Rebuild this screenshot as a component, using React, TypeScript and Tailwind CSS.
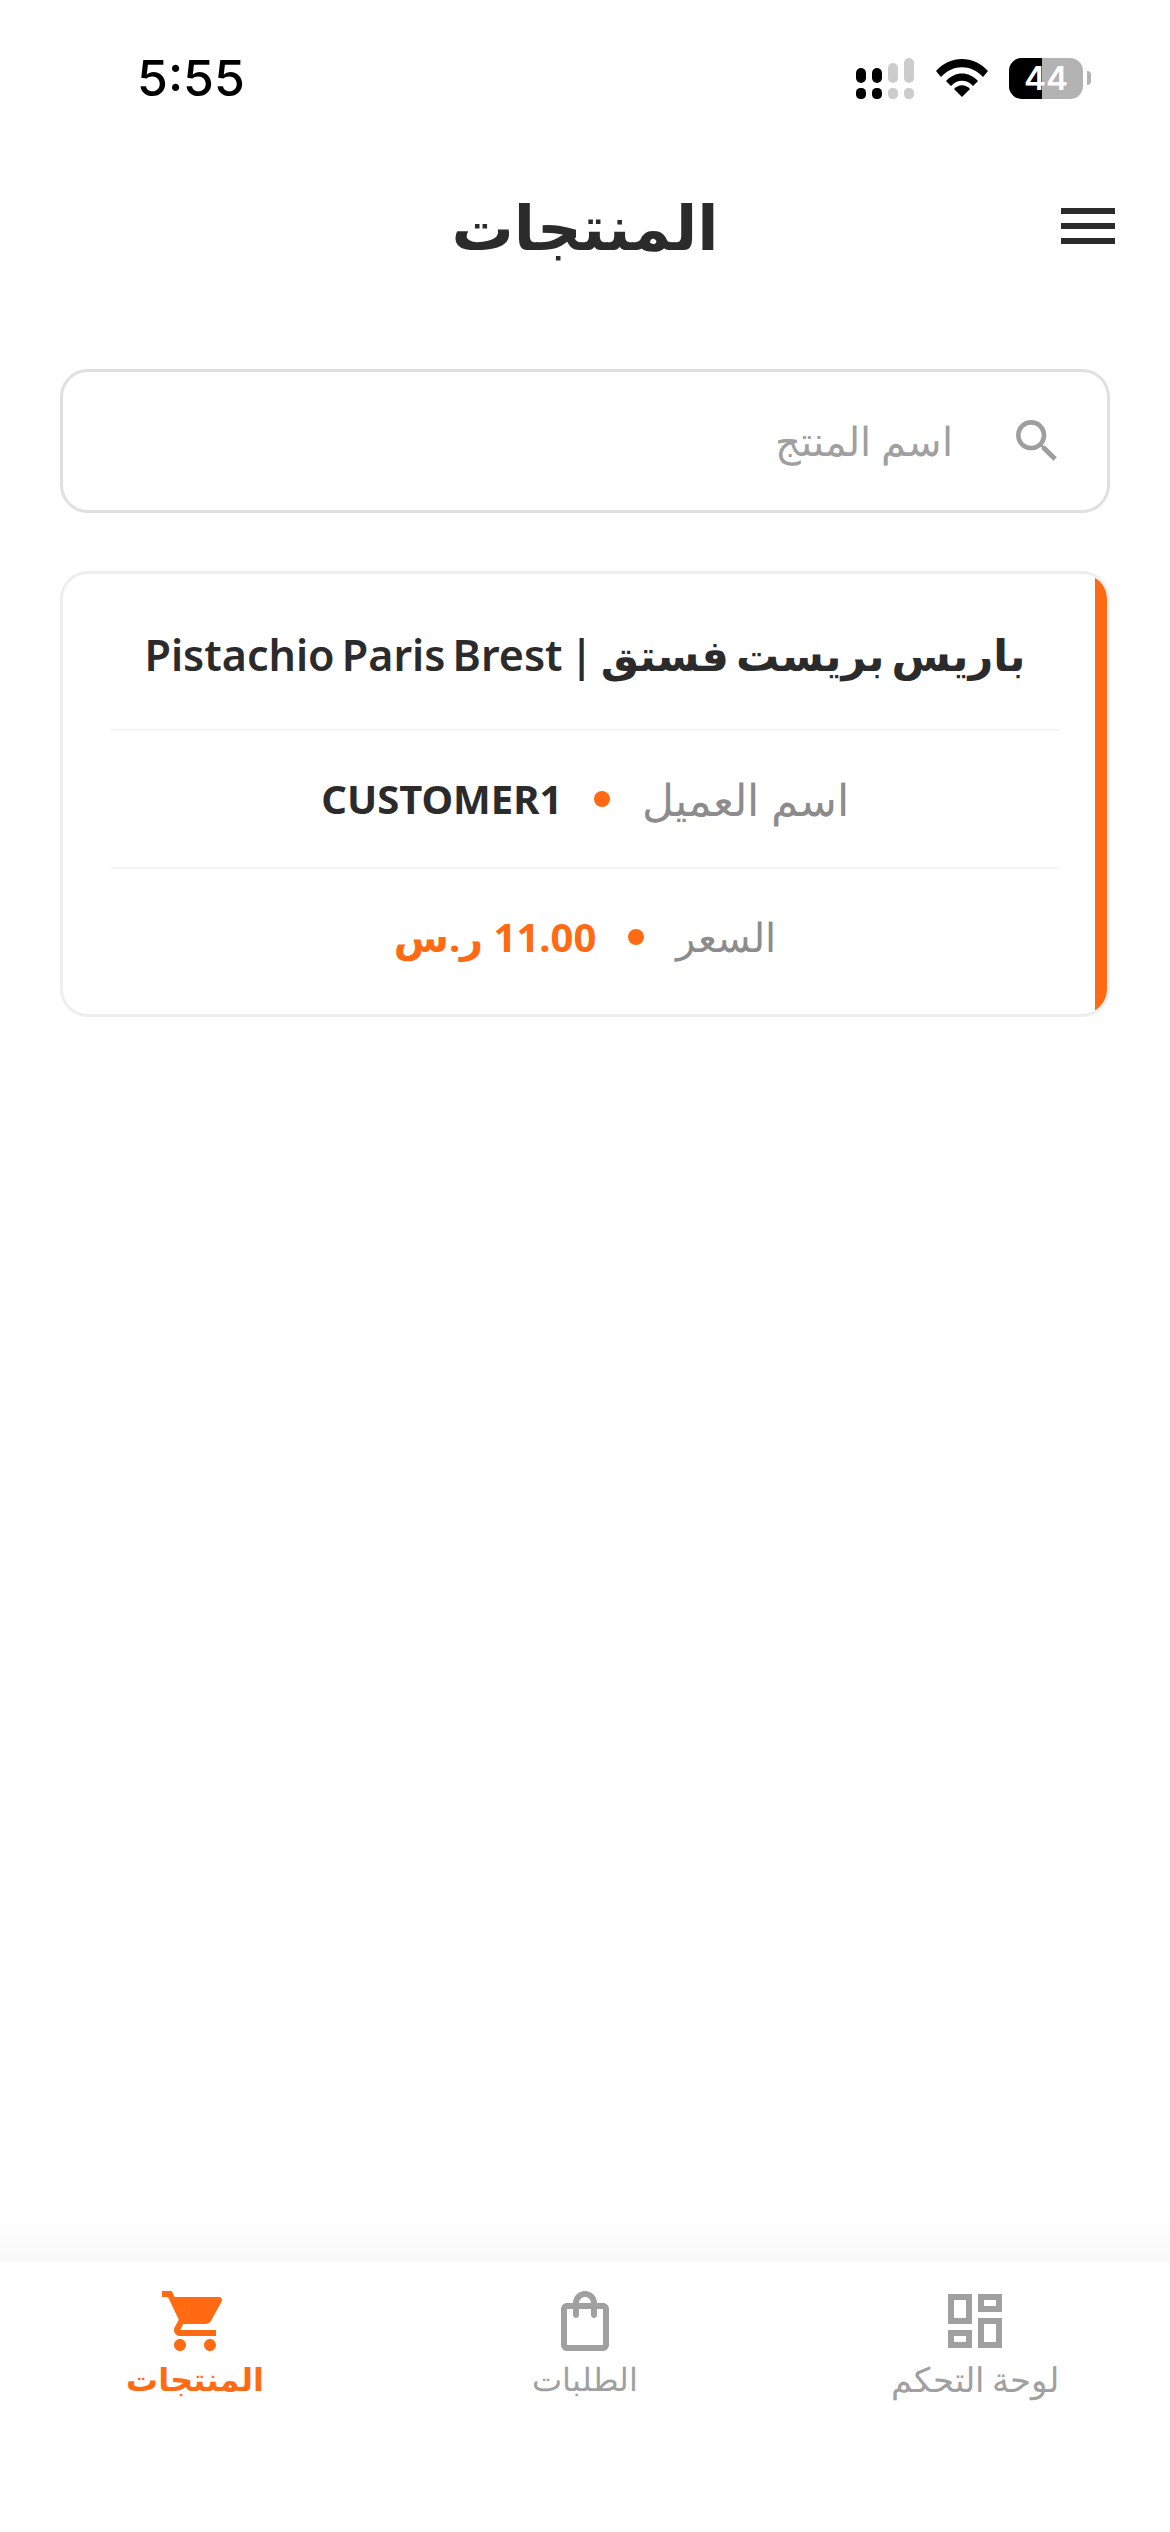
import { MdMenu, MdOutlineDashboard, MdOutlineShoppingBag, MdSearch, MdShoppingCart } from "react-icons/md";

const StatusBar = () => {
  return (
    <div dir="ltr" className="flex items-center justify-between h-[156px] pl-[137px] pr-[79px]">
      <span className="font-['Inter',sans-serif] text-[50px] font-medium text-black leading-none">5:55</span>
      <div className="flex items-center">
        {/* Signal */}
        <svg width="58" height="41" viewBox="0 0 58 41" className="mr-[22px]">
          <rect x="0" y="10" width="10" height="15" rx="5" fill="#000" />
          <rect x="16" y="10" width="10" height="15" rx="5" fill="#000" />
          <rect x="32" y="5" width="10" height="20" rx="5" fill="#ccc" />
          <rect x="48" y="0" width="10" height="25" rx="5" fill="#ccc" />
          <rect x="0" y="30" width="10" height="11" rx="4.5" fill="#000" />
          <rect x="16" y="30" width="10" height="11" rx="4.5" fill="#000" />
          <rect x="32" y="30" width="10" height="11" rx="4.5" fill="#ccc" />
          <rect x="48" y="30" width="10" height="11" rx="4.5" fill="#ccc" />
        </svg>
        {/* Wifi */}
        <svg width="52" height="38" viewBox="0 0 52 38" className="mr-[21px]">
          <path d="M0 12 C14 -4 38 -4 52 12 L47 18 C35 5 17 5 5 18 Z" fill="#000" />
          <path d="M10 22 C19 12 33 12 42 22 L37 27 C31 20 21 20 15 27 Z" fill="#000" />
          <path d="M18 30 C23 25 29 25 34 30 L26 38 Z" fill="#000" />
        </svg>
        {/* Battery */}
        <div className="relative h-[41px] w-[74px] rounded-[13px] bg-[#b3b3b3] overflow-hidden flex items-center justify-center">
          <div className="absolute inset-y-0 left-0 w-[33px] bg-black"></div>
          <span className="relative font-['Inter',sans-serif] text-[33px] font-semibold text-white leading-none">44</span>
        </div>
        <div className="h-[14px] w-[4px] rounded-r-full bg-[#b3b3b3] ml-[4px]"></div>
      </div>
    </div>
  );
};

const Row = ({ label, value, labelClass, valueClass }: { label: string; value: string; labelClass: string; valueClass: string }) => {
  return (
    <div className="flex items-center justify-center h-[136px]">
      <span className={"text-[#8c8c8c] font-light leading-none " + labelClass}>{label}</span>
      <span className="w-[16px] h-[16px] mx-[32px] rounded-full bg-[#ff6a13]"></span>
      <span className={"text-[40px] font-bold leading-none " + valueClass}>{value}</span>
    </div>
  );
};

const NavItem = ({ icon, label, labelClass, active }: { icon: React.ReactNode; label: string; labelClass: string; active?: boolean }) => {
  return (
    <div className={"flex flex-col items-center " + (active ? "text-[#ff6a13]" : "text-[#a0a0a0]")}>
      {icon}
      <span className={"leading-[44px] " + labelClass + (active ? " font-bold" : " font-light")}>{label}</span>
    </div>
  );
};

export default function App() {
  return (
    <div dir="rtl" className="flex flex-col min-h-[2532px] bg-white font-['Noto_Sans','DejaVu_Sans',sans-serif]">
      <StatusBar />

      {/* Header */}
      <div className="grid grid-cols-[1fr_auto_1fr] items-center h-[140px]">
        <div className="flex pr-[46px]">
          <MdMenu size={72} className="text-[#2b2b2b]" />
        </div>
        <h1 className="text-[62px] font-bold text-[#2b2b2b] leading-none">المنتجات</h1>
        <div></div>
      </div>

      <main className="flex-1 px-[60px] pt-[73px]">
        {/* Search */}
        <div className="flex items-center h-[144px] rounded-[28px] border-[3px] border-[#e0e0e0] pr-[42px] gap-[56px]">
          <MdSearch size={56} className="text-[#9e9e9e]" />
          <span className="text-[40px] text-[#a0a0a0] font-light">اسم المنتج</span>
        </div>

        {/* Card */}
        <div className="relative mt-[58px] rounded-[28px] border-[3px] border-[#eeeeee] bg-white overflow-hidden">
          <div className="absolute inset-y-0 right-0 w-[12px] bg-[#ff6a13]"></div>
          <div className="flex items-center justify-center h-[157px] mx-[48px] border-b-2 border-[#f5f5f5] pt-[6px]">
            <span className="text-[43px] font-semibold text-[#2b2b2b] leading-none [word-spacing:-4px]">باريس بريست فستق | Pistachio Paris Brest</span>
          </div>
          <div className="mx-[48px] border-b-2 border-[#f5f5f5]">
            <Row label="اسم العميل" labelClass="text-[44px]" value="CUSTOMER1" valueClass="text-[#2b2b2b]" />
          </div>
          <div className="mx-[48px] pb-[9px]">
            <Row label="السعر" labelClass="text-[40px]" value="11.00 ر.س" valueClass="text-[#ff6a13]" />
          </div>
        </div>
      </main>

      {/* Bottom nav */}
      <nav className="relative grid grid-cols-3 h-[270px] pt-[23px] bg-white">
        <div className="absolute bottom-full inset-x-0 h-[48px] bg-linear-to-b from-white to-[#f9f9f9]"></div>
        <NavItem icon={<MdOutlineDashboard size={72} />} label="لوحة التحكم" labelClass="text-[34px]" />
        <NavItem icon={<MdOutlineShoppingBag size={72} />} label="الطلبات" labelClass="text-[32px]" />
        <NavItem icon={<MdShoppingCart size={72} />} label="المنتجات" labelClass="text-[32px]" active />
      </nav>
    </div>
  );
}
